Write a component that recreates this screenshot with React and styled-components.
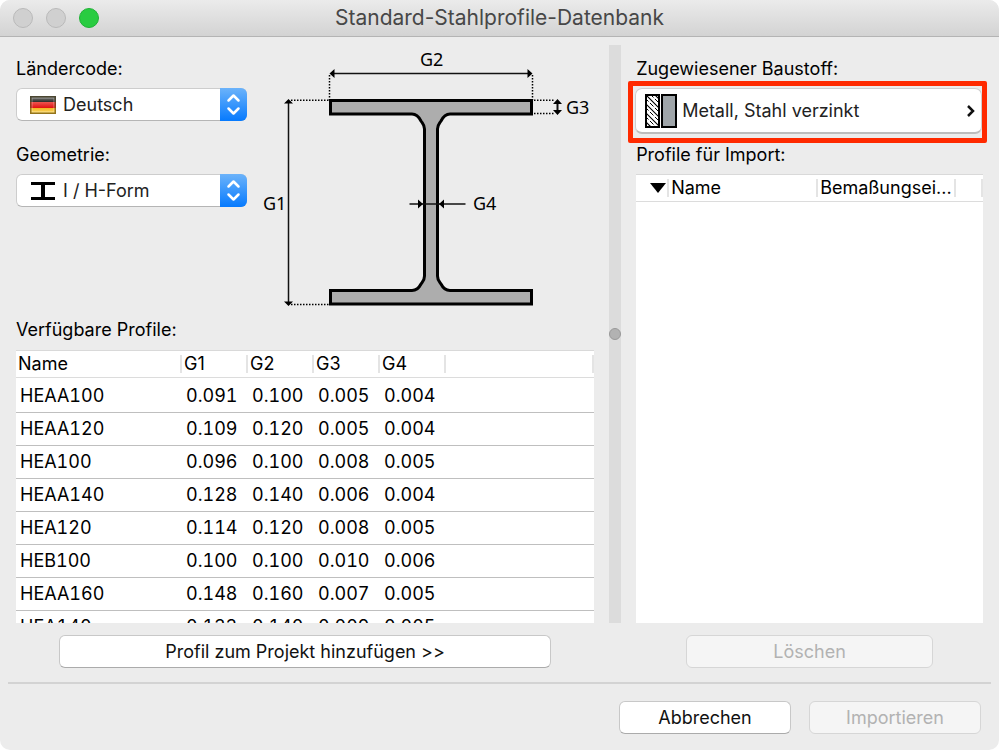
import React from 'react';
import styled, { createGlobalStyle } from 'styled-components';

const GlobalStyle = createGlobalStyle`
  * {
    box-sizing: border-box;
  }
  body {
    margin: 0;
    background: #fff;
    color: #000;
    font-family: Inter, 'Liberation Sans', sans-serif;
    font-size: 18px;
    line-height: 24px;
  }
  button,
  select {
    font: inherit;
  }
`;

const Window = styled.div`
  display: flex;
  flex-direction: column;
  height: 100vh;
  overflow: hidden;
  border-radius: 10px;
  background: #ececec;
`;

const TitleBar = styled.header`
  display: grid;
  grid-template-columns: 1fr auto 1fr;
  align-items: center;
  height: 37px;
  flex: none;
  padding: 0 13px;
  background: linear-gradient(#ebebeb, #d3d3d3);
  border-bottom: 1px solid #b4b4b4;
`;

const Lights = styled.div`
  display: flex;
  gap: 13px;
`;

const Light = styled.button`
  width: 20px;
  height: 20px;
  padding: 0;
  border: 1px solid ${props => (props.$active ? '#1fb236' : '#b9b9b9')};
  border-radius: 50%;
  background: ${props => (props.$active ? '#29cc41' : '#d0d0d0')};
`;

const Title = styled.h1`
  margin: 0;
  color: #474747;
  font-size: 21px;
  font-weight: 400;
`;

const Panes = styled.main`
  display: grid;
  grid-template-columns: minmax(0, 5fr) 12px minmax(0, 3fr);
  grid-template-rows: minmax(0, 1fr);
  column-gap: 15px;
  flex: 1;
  min-height: 0;
  padding: 8px 16px 14px;
`;

const Pane = styled.section`
  display: flex;
  flex-direction: column;
  min-height: 0;
  padding-top: ${props => (props.$inset ? '12px' : '0')};
`;

const Splitter = styled.div`
  display: flex;
  align-items: center;
  justify-content: center;
  margin-bottom: 45px;
  background: #dcdcdc;

  &::after {
    content: '';
    width: 10px;
    height: 10px;
    border: 1px solid #999;
    border-radius: 50%;
    background: #b2b2b2;
  }
`;

const Geometry = styled.div`
  display: flex;
  gap: 8px;
`;

const Fields = styled.div`
  display: flex;
  flex-direction: column;
  gap: 22px;
  flex: none;
  width: 231px;
  padding-top: 12px;
`;

const Label = styled.label`
  display: block;
  margin-bottom: ${props => (props.$tight ? '0' : '7px')};
`;

const ListTitle = styled.h2`
  margin: 0 0 ${props => props.$gap};
  font-size: 18px;
  font-weight: 400;
`;

const SelectBox = styled.div`
  position: relative;
  display: flex;
  height: 33px;
`;

const Select = styled.select`
  width: 100%;
  height: 33px;
  padding: 0 30px 0 46px;
  appearance: none;
  border: 1px solid #cdcdcd;
  border-bottom-color: #b5b5b5;
  border-radius: 6px;
  background: #fff;
  color: #222;
`;

const SelectIcon = styled.svg`
  position: absolute;
  left: 14px;
  top: 7px;
  pointer-events: none;
`;

const Stepper = styled.span`
  position: absolute;
  right: 0;
  top: 0;
  display: flex;
  width: 27px;
  height: 33px;
  border-radius: 0 6px 6px 0;
  background: linear-gradient(#6cb3fa, #067afe);
  pointer-events: none;
`;

const Diagram = styled.svg`
  flex: none;
  width: 340px;
  height: 273px;
  font-family: 'Noto Sans', sans-serif;
  font-size: 18px;
`;

const ListBox = styled.div`
  flex: 1;
  min-height: 0;
  overflow: hidden;
  border-top: 1px solid #d9d9d9;
  background: #fff;
`;

const Table = styled.table`
  width: 100%;
  table-layout: fixed;
  border-collapse: separate;
  border-spacing: 0;
  text-align: left;
`;

const HeadCell = styled.th`
  height: 27px;
  padding: 0 2px;
  border-bottom: 1px solid #dcdcdc;
  background: linear-gradient(#e4e4e4, #e4e4e4) no-repeat right center / 2px 18px;
  font-weight: 400;
  white-space: nowrap;
`;

const Cell = styled.td`
  height: 33px;
  padding: 0 0 0 4px;
  border-bottom: 1px solid #bfbfbf;
  font-variant-numeric: tabular-nums;
  white-space: nowrap;

  tr:first-child > & {
    height: 35px;
    padding-top: 1px;
  }
`;

const Highlight = styled.div`
  margin: 0 -4px 0 -8px;
  padding: 2px 0 4px 2px;
  border: 5px solid #ff2a00;
  border-radius: 2px;
`;

const MaterialButton = styled.button`
  display: flex;
  align-items: center;
  gap: 5px;
  width: 100%;
  height: 46px;
  padding: 0 6px 0 9px;
  border: 1px solid #cfcfcf;
  border-bottom: 2px solid #bdbdbd;
  border-radius: 7px;
  background: #fff;
  color: #222;
  text-align: left;

  span {
    flex: 1;
  }
`;

const Button = styled.button`
  width: ${props => props.$width};
  height: 33px;
  padding: 0;
  align-self: center;
  border: 1px solid #c8c8c8;
  border-bottom-color: #ababab;
  border-radius: 6px;
  background: #fff;
  color: #111;

  &:disabled {
    border-color: #d6d6d6;
    background: #f5f5f5;
    color: #b2b2b2;
  }
`;

const PaneButton = styled(Button)`
  flex: none;
  margin-top: 12px;
`;

const Footer = styled.footer`
  display: flex;
  justify-content: flex-end;
  gap: 18px;
  flex: none;
  margin: 0 8px;
  padding: 17px 10px 16px;
  border-top: 2px solid #d3d3d3;
`;

const profiles = [
  ['HEAA100', '0.091', '0.100', '0.005', '0.004'],
  ['HEAA120', '0.109', '0.120', '0.005', '0.004'],
  ['HEA100', '0.096', '0.100', '0.008', '0.005'],
  ['HEAA140', '0.128', '0.140', '0.006', '0.004'],
  ['HEA120', '0.114', '0.120', '0.008', '0.005'],
  ['HEB100', '0.100', '0.100', '0.010', '0.006'],
  ['HEAA160', '0.148', '0.160', '0.007', '0.005'],
  ['HEA140', '0.133', '0.140', '0.009', '0.005']
];

const FlagIcon = () => (
  <SelectIcon width="27" height="20" viewBox="0 0 27 20" aria-hidden="true">
    <defs>
      <linearGradient id="black" x1="0" y1="0" x2="0" y2="1">
        <stop offset="0" stopColor="#8c8c88" />
        <stop offset="1" stopColor="#2b2b28" />
      </linearGradient>
      <linearGradient id="red" x1="0" y1="0" x2="0" y2="1">
        <stop offset="0" stopColor="#ee5550" />
        <stop offset="1" stopColor="#e01010" />
      </linearGradient>
      <linearGradient id="gold" x1="0" y1="0" x2="0" y2="1">
        <stop offset="0" stopColor="#f3b51f" />
        <stop offset="1" stopColor="#fbe27a" />
      </linearGradient>
    </defs>
    <rect y="1" width="26" height="6" fill="url(#black)" />
    <rect y="7" width="26" height="6" fill="url(#red)" />
    <rect y="13" width="26" height="6" fill="url(#gold)" />
    <rect x="2" y="3" width="22" height="14" fill="none" stroke="#fff" strokeOpacity="0.35" />
    <path d="M.75 7V1.75h24.5V7" fill="none" stroke="#4a4631" strokeWidth="1.5" />
    <path d="M.75 7v6M25.25 7v6" stroke="#8f3a1c" strokeWidth="1.5" />
    <path d="M.75 13v5.25h24.5V13" fill="none" stroke="#94741b" strokeWidth="1.5" />
  </SelectIcon>
);

const BeamIcon = () => (
  <SelectIcon width="27" height="20" viewBox="0 0 27 20" aria-hidden="true">
    <path d="M1 1h24v3H15v12h10v3H1v-3h10V4H1z" />
  </SelectIcon>
);

const SelectField = ({ id, label, value, icon }) => (
  <div>
    <Label htmlFor={id}>{label}</Label>
    <SelectBox>
      <Select id={id} defaultValue={value}>
        <option>{value}</option>
      </Select>
      {icon}
      <Stepper>
        <svg width="27" height="33" viewBox="0 0 27 33" aria-hidden="true">
          <path
            d="M8.5 12.5l5-5 5 5M8.5 20.5l5 5 5-5"
            fill="none"
            stroke="#fff"
            strokeWidth="2.5"
            strokeLinecap="round"
            strokeLinejoin="round"
          />
        </svg>
      </Stepper>
    </SelectBox>
  </div>
);

const BeamDiagram = () => (
  <Diagram viewBox="255 45 340 273" role="img" aria-label="I / H-Form">
    <path
      d="M330.5 100.5h201V114H450c-4 0-7 3-9 7-2 3-3.500 4-3.500 8v147c0 4 1.500 5 3.500 8 2 4 5 6.500 9 6.500h81.500V304h-201v-13.500H412c4 0 7-2.500 9-6.500 2-3 3.500-4 3.500-8V129c0-4-1.500-5-3.500-8-2-4-5-7-9-7h-81.500z"
      fill="#adadad"
      stroke="#000"
      strokeWidth="3"
    />
    <g stroke="#000" strokeWidth="1.5" strokeDasharray="1.5 1.5">
      <path d="M329.5 75v25M532.5 75v25M291 100.250h38M291 304.5h38" />
      <path d="M534 100.250h20M534 113.5h20" />
    </g>
    <g stroke="#111" strokeWidth="1.5">
      <path d="M288.5 102v200M332 73.5h198M409.5 204h56" />
      <path d="M557.5 103v8" strokeWidth="2" />
    </g>
    <path d="M288.5 99l4.5 4.5h-9zM288.5 306l4.5-4.5h-9z" />
    <path d="M329.5 73.5l5-4.5v9zM532.5 73.5l-5-4.5v9z" />
    <path d="M557.5 99l4.5 5h-9zM557.5 115l4.5-5h-9z" />
    <path d="M423 204l-5-4.5v9zM439 204l5-4.5v9z" />
    <text x="420" y="66">G2</text>
    <text x="566" y="114">G3</text>
    <text x="263" y="210">G1</text>
    <text x="473" y="210">G4</text>
  </Diagram>
);

const MaterialIcon = () => (
  <svg width="32" height="34" viewBox="0 0 32 34" aria-hidden="true">
    <defs>
      <clipPath id="hatch">
        <rect x="1" y="1" width="13" height="32" />
      </clipPath>
    </defs>
    <g clipPath="url(#hatch)" stroke="#000">
      <path d="M0-9l15 15M0 0l15 15M0 9l15 15M0 18l15 15M0 27l15 15" strokeWidth="1.2" />
      <path
        d="M0-5l15 15M0 4l15 15M0 13l15 15M0 22l15 15M0 31l15 15"
        strokeDasharray="5 2"
      />
    </g>
    <rect x="1" y="1" width="13" height="32" fill="none" stroke="#000" strokeWidth="2" />
    <rect x="17" y="1" width="14" height="32" fill="#9fa5a9" stroke="#000" strokeWidth="2" />
  </svg>
);

const ProfileTable = () => (
  <Table aria-labelledby="available-title">
    <colgroup>
      <col width="166" />
      <col width="66" />
      <col width="66" />
      <col width="66" />
      <col width="66" />
      <col />
    </colgroup>
    <thead>
      <tr>
        {['Name', 'G1', 'G2', 'G3', 'G4', ''].map(head => (
          <HeadCell key={head}>{head}</HeadCell>
        ))}
      </tr>
    </thead>
    <tbody>
      {profiles.map(row => (
        <tr key={row[0]}>
          {row.map((value, i) => (
            <Cell key={i}>{value}</Cell>
          ))}
          <Cell />
        </tr>
      ))}
    </tbody>
  </Table>
);

const ImportTable = () => (
  <Table aria-labelledby="import-title">
    <colgroup>
      <col width="33" />
      <col width="149" />
      <col width="138" />
      <col />
    </colgroup>
    <thead>
      <tr>
        <HeadCell>
          <svg width="31" height="12" viewBox="0 0 31 12" aria-hidden="true">
            <path d="M12 1h16l-8 10z" />
          </svg>
        </HeadCell>
        <HeadCell>Name</HeadCell>
        <HeadCell>Bemaßungsei...</HeadCell>
        <HeadCell />
      </tr>
    </thead>
  </Table>
);

const App = () => {
  return (
    <Window>
      <GlobalStyle />
      <TitleBar>
        <Lights>
          <Light aria-label="Schließen" />
          <Light aria-label="Minimieren" />
          <Light aria-label="Zoomen" $active />
        </Lights>
        <Title>Standard-Stahlprofile-Datenbank</Title>
      </TitleBar>

      <Panes>
        <Pane>
          <Geometry>
            <Fields>
              <SelectField
                id="country"
                label="Ländercode:"
                value="Deutsch"
                icon={<FlagIcon />}
              />
              <SelectField
                id="geometry"
                label="Geometrie:"
                value="I / H-Form"
                icon={<BeamIcon />}
              />
            </Fields>
            <BeamDiagram />
          </Geometry>
          <ListTitle id="available-title" $gap="8px">
            Verfügbare Profile:
          </ListTitle>
          <ListBox>
            <ProfileTable />
          </ListBox>
          <PaneButton $width="85%">{'Profil zum Projekt hinzufügen >>'}</PaneButton>
        </Pane>

        <Splitter />

        <Pane $inset>
          <Label htmlFor="material" $tight>
            Zugewiesener Baustoff:
          </Label>
          <Highlight>
            <MaterialButton id="material">
              <MaterialIcon />
              <span>Metall, Stahl verzinkt</span>
              <svg width="9" height="14" viewBox="0 0 9 14" aria-hidden="true">
                <path d="M2 2l5 5-5 5" fill="none" stroke="#111" strokeWidth="2.5" />
              </svg>
            </MaterialButton>
          </Highlight>
          <ListTitle id="import-title" $gap="7px">
            Profile für Import:
          </ListTitle>
          <ListBox>
            <ImportTable />
          </ListBox>
          <PaneButton $width="71%" disabled>
            Löschen
          </PaneButton>
        </Pane>
      </Panes>

      <Footer>
        <Button $width="172px">Abbrechen</Button>
        <Button $width="172px" disabled>
          Importieren
        </Button>
      </Footer>
    </Window>
  );
};

export default App;
